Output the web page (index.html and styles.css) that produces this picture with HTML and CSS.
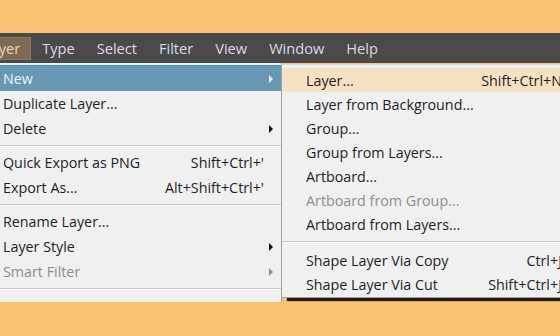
FILE: index.html
```html
<!DOCTYPE html>
<html>
<head>
  <meta charset="UTF-8">
  <link rel="stylesheet" href="styles.css">
</head>
<body>
  <div class="stage">
    <div class="menubar">
      <span class="menu-title active">Layer</span>
      <span class="menu-title">Type</span>
      <span class="menu-title">Select</span>
      <span class="menu-title">Filter</span>
      <span class="menu-title">View</span>
      <span class="menu-title">Window</span>
      <span class="menu-title">Help</span>
    </div>

    <div class="dropdown-wrap">
      <ul class="menu main-menu">
        <li class="item selected"><span class="label">New</span><span class="key"></span><span class="arrow"></span></li>
        <li class="item"><span class="label">Duplicate Layer...</span><span class="key"></span><span class="arrow none"></span></li>
        <li class="item"><span class="label">Delete</span><span class="key"></span><span class="arrow"></span></li>
        <li class="sep"></li>
        <li class="item"><span class="label">Quick Export as PNG</span><span class="key">Shift+Ctrl+'</span><span class="arrow none"></span></li>
        <li class="item"><span class="label">Export As...</span><span class="key">Alt+Shift+Ctrl+'</span><span class="arrow none"></span></li>
        <li class="sep"></li>
        <li class="item"><span class="label">Rename Layer...</span><span class="key"></span><span class="arrow none"></span></li>
        <li class="item"><span class="label">Layer Style</span><span class="key"></span><span class="arrow"></span></li>
        <li class="item disabled"><span class="label">Smart Filter</span><span class="key"></span><span class="arrow"></span></li>
        <li class="sep"></li>
        <!-- next row is cut off by the screenshot, only its arrow peeks out -->
        <li class="item"><span class="label"></span><span class="key"></span><span class="arrow"></span></li>
      </ul>

      <ul class="menu submenu">
        <li class="item hover"><span class="label">Layer...</span><span class="key">Shift+Ctrl+N</span></li>
        <li class="item"><span class="label">Layer from Background...</span><span class="key"></span></li>
        <li class="item"><span class="label">Group...</span><span class="key"></span></li>
        <li class="item"><span class="label">Group from Layers...</span><span class="key"></span></li>
        <li class="item"><span class="label">Artboard...</span><span class="key"></span></li>
        <li class="item disabled"><span class="label">Artboard from Group...</span><span class="key"></span></li>
        <li class="item"><span class="label">Artboard from Layers...</span><span class="key"></span></li>
        <li class="sep"></li>
        <li class="item"><span class="label">Shape Layer Via Copy</span><span class="key">Ctrl+J</span></li>
        <li class="item"><span class="label">Shape Layer Via Cut</span><span class="key">Shift+Ctrl+J</span></li>
      </ul>
    </div>
  </div>
</body>
</html>
```

FILE: styles.css
```css
html, body {
  margin: 0;
  padding: 0;
  height: 100%;
  overflow: hidden;
}

body {
  background: #f8c471;
  font-family: 'Open Sans', 'Noto Sans', sans-serif;
  font-size: 14.3px;
}

/* the screenshot is cropped, so the whole thing sits a bit off to the left */
.stage {
  margin-left: -26px;
  padding-top: 33px;
}

.menubar {
  display: flex;
  align-items: center;
  height: 30px;
  margin-left: -2px;
  background: #4a4a4a;
  color: #d7dce4;
  font-size: 14.6px;
}

.menu-title {
  padding: 0 11px;
  line-height: 23px;
}

.menu-title.active {
  background: #7d6a52;
  color: #eed8b8;
  box-shadow: inset 0 0 0 1px #8c7a60;
}

.dropdown-wrap {
  position: relative;
  height: 239px;
  overflow: hidden;
}

.menu {
  list-style: none;
  margin: 0;
  padding: 0;
  background: #f0f0f0;
  color: #1f1d28;
}

.main-menu {
  width: 308px;
  padding-top: 2px;
  border-right: 1px solid #a3a3a3;
  height: 100%;
  box-sizing: border-box;
}

.item {
  display: flex;
  align-items: center;
  height: 25px;
  padding-left: 29px;
  white-space: nowrap;
}

.item .label {
  flex: 1;
}

.item.disabled {
  color: #8e8e8e;
}

.main-menu .key {
  text-align: right;
}

.arrow {
  width: 17px;
  height: 8px;
  flex: 0 0 17px;
  position: relative;
}

.arrow::after {
  content: '';
  position: absolute;
  left: 5px;
  top: 0;
  border-left: 4px solid #111;
  border-top: 4px solid transparent;
  border-bottom: 4px solid transparent;
}

.arrow.none::after {
  display: none;
}

.disabled .arrow::after {
  border-left-color: #8e8e8e;
}

.main-menu .selected {
  background: #6798b3;
  color: #eef2f5;
  border-top: 1px solid #3b8ee0;
  height: 25px;
}

.selected .arrow::after {
  border-left-color: #f3ecdc;
}

.sep {
  height: 1px;
  margin: 4px 0 3px;
  background: #c6c6c6;
  border-bottom: 1px solid #fbfbfb;
}

.submenu {
  position: absolute;
  left: 307px;
  top: 1px;
  width: 300px;
  padding: 3px 0 1px;
  border: 1px solid #a0a0a0;
  border-top-color: #d6d6d6;
  box-shadow: 6px 3px 1px rgba(0, 0, 0, 0.85);
}

.submenu .item {
  height: 24px;
  padding-left: 24px;
}

.submenu .key {
  padding-right: 20px;
}

.submenu .hover {
  background: #f6e2c3;
}

.submenu .sep {
  margin: 5px 0 5px;
}
```
